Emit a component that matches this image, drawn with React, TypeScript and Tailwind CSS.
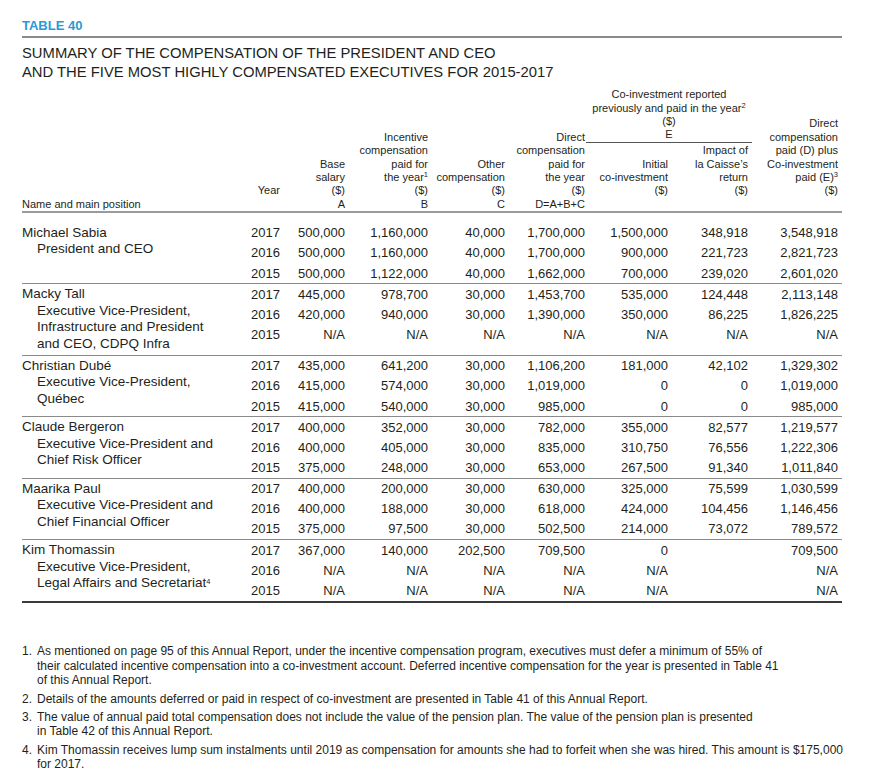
import type { ReactNode } from 'react';

const COLS = [
  'w-[40px]',
  'w-[65px]',
  'w-[83px]',
  'w-[77px]',
  'w-[81px] pr-[1px]',
  'w-[82px]',
  'w-[84px] pr-[4px]',
  'w-[90px] pr-[4px]',
];

type Group = {
  name: string;
  position: ReactNode[];
  rows: string[][];
  cls: string;
};

const NA = ['N/A', 'N/A', 'N/A', 'N/A', 'N/A', 'N/A', 'N/A'];

const GROUPS: Group[] = [
  {
    name: 'Michael Sabia',
    position: ['President and CEO'],
    cls: 'pt-[10px] border-b border-[#8a8a8a]',
    rows: [
      ['2017', '500,000', '1,160,000', '40,000', '1,700,000', '1,500,000', '348,918', '3,548,918'],
      ['2016', '500,000', '1,160,000', '40,000', '1,700,000', '900,000', '221,723', '2,821,723'],
      ['2015', '500,000', '1,122,000', '40,000', '1,662,000', '700,000', '239,020', '2,601,020'],
    ],
  },
  {
    name: 'Macky Tall',
    position: [
      'Executive Vice-President,',
      'Infrastructure and President',
      'and CEO, CDPQ Infra',
    ],
    cls: 'h-[71.5px] border-b border-[#8a8a8a]',
    rows: [
      ['2017', '445,000', '978,700', '30,000', '1,453,700', '535,000', '124,448', '2,113,148'],
      ['2016', '420,000', '940,000', '30,000', '1,390,000', '350,000', '86,225', '1,826,225'],
      ['2015', ...NA],
    ],
  },
  {
    name: 'Christian Dubé',
    position: ['Executive Vice-President,', 'Québec'],
    cls: 'border-b border-[#8a8a8a]',
    rows: [
      ['2017', '435,000', '641,200', '30,000', '1,106,200', '181,000', '42,102', '1,329,302'],
      ['2016', '415,000', '574,000', '30,000', '1,019,000', '0', '0', '1,019,000'],
      ['2015', '415,000', '540,000', '30,000', '985,000', '0', '0', '985,000'],
    ],
  },
  {
    name: 'Claude Bergeron',
    position: ['Executive Vice-President and', 'Chief Risk Officer'],
    cls: 'border-b border-[#8a8a8a]',
    rows: [
      ['2017', '400,000', '352,000', '30,000', '782,000', '355,000', '82,577', '1,219,577'],
      ['2016', '400,000', '405,000', '30,000', '835,000', '310,750', '76,556', '1,222,306'],
      ['2015', '375,000', '248,000', '30,000', '653,000', '267,500', '91,340', '1,011,840'],
    ],
  },
  {
    name: 'Maarika Paul',
    position: ['Executive Vice-President and', 'Chief Financial Officer'],
    cls: 'border-b border-[#8a8a8a]',
    rows: [
      ['2017', '400,000', '200,000', '30,000', '630,000', '325,000', '75,599', '1,030,599'],
      ['2016', '400,000', '188,000', '30,000', '618,000', '424,000', '104,456', '1,146,456'],
      ['2015', '375,000', '97,500', '30,000', '502,500', '214,000', '73,072', '789,572'],
    ],
  },
  {
    name: 'Kim Thomassin',
    position: [
      'Executive Vice-President,',
      <>
        Legal Affairs and Secretariat<sup className="text-[7.5px]">4</sup>
      </>,
    ],
    cls: 'border-b-2 border-[#3a3a3a]',
    rows: [
      ['2017', '367,000', '140,000', '202,500', '709,500', '0', '', '709,500'],
      ['2016', 'N/A', 'N/A', 'N/A', 'N/A', 'N/A', '', 'N/A'],
      ['2015', 'N/A', 'N/A', 'N/A', 'N/A', 'N/A', '', 'N/A'],
    ],
  },
];

/** Stack of header lines, bottom-aligned, one 13.35px slot per line. */
function HeadLines({
  lines,
  className = '',
  align = 'text-right',
}: {
  lines: ReactNode[];
  className?: string;
  align?: string;
}) {
  return (
    <div className={`flex flex-col ${className}`}>
      {lines.map((l, i) => (
        <div key={i} className={`h-[13.35px] whitespace-nowrap leading-[13.35px] ${align}`}>
          {l}
        </div>
      ))}
    </div>
  );
}

function Sup({ n }: { n: string }) {
  return <sup className="text-[7.5px]">{n}</sup>;
}

function Header() {
  return (
    <div className="mt-[7.4px] flex items-end border-b-2 border-[#9a9a9a] text-[11px]">
      <HeadLines lines={['Name and main position']} align="text-left" className="w-[218px]" />
      <HeadLines lines={['Year', '']} className={COLS[0]} />
      <HeadLines lines={['Base', 'salary', '($)', 'A']} className={COLS[1]} />
      <HeadLines
        lines={['Incentive', 'compensation', 'paid for', <>the year<Sup n="1" /></>, '($)', 'B']}
        className={COLS[2]}
      />
      <HeadLines lines={['Other', 'compensation', '($)', 'C']} className={COLS[3]} />
      <HeadLines
        lines={['Direct', 'compensation', 'paid for', 'the year', '($)', 'D=A+B+C']}
        className={COLS[4]}
      />
      <div className="flex flex-col">
        <div className="border-b border-[#555]">
          <HeadLines
            align="text-center"
            lines={[
              'Co-investment reported',
              <>previously and paid in the year<Sup n="2" /></>,
              '($)',
              'E',
            ]}
          />
        </div>
        <div className="mt-[1.5px] flex">
          <HeadLines lines={['', 'Initial', 'co-investment', '($)', '']} className={COLS[5]} />
          <HeadLines
            lines={['Impact of', 'la Caisse\u2019s', 'return', '($)', '']}
            className={COLS[6]}
          />
        </div>
      </div>
      <HeadLines
        lines={[
          'Direct',
          'compensation',
          'paid (D) plus',
          'Co-investment',
          <>paid (E)<Sup n="3" /></>,
          '($)',
          '',
        ]}
        className={COLS[7]}
      />
    </div>
  );
}

function GroupRows({ group }: { group: Group }) {
  return (
    <div className={`flex ${group.cls}`}>
      <div className="w-[218px] pt-[1.8px] text-[13.5px] leading-[16.6px]">
        <div className="whitespace-nowrap">{group.name}</div>
        {group.position.map((p, i) => (
          <div key={i} className="whitespace-nowrap pl-[15px]">
            {p}
          </div>
        ))}
      </div>
      <div className="flex flex-col">
        {group.rows.map((row, r) => (
          <div key={r} className="flex h-[20.17px] items-center">
            {row.map((cell, c) => (
              <div key={c} className={`text-right whitespace-nowrap ${COLS[c]}`}>
                {cell}
              </div>
            ))}
          </div>
        ))}
      </div>
    </div>
  );
}

const NOTES: { n: string; lines: ReactNode[] }[] = [
  {
    n: '1.',
    lines: [
      'As mentioned on page 95 of this Annual Report, under the incentive compensation program, executives must defer a minimum of 55% of',
      'their calculated incentive compensation into a co-investment account. Deferred incentive compensation for the year is presented in Table 41',
      'of this Annual Report.',
    ],
  },
  {
    n: '2.',
    lines: [
      'Details of the amounts deferred or paid in respect of co-investment are presented in Table 41 of this Annual Report.',
    ],
  },
  {
    n: '3.',
    lines: [
      'The value of annual paid total compensation does not include the value of the pension plan. The value of the pension plan is presented',
      'in Table 42 of this Annual Report.',
    ],
  },
  {
    n: '4.',
    lines: [
      'Kim Thomassin receives lump sum instalments until 2019 as compensation for amounts she had to forfeit when she was hired. This amount is $175,000',
      'for 2017.',
    ],
  },
];

export default function App() {
  return (
    <div className="min-h-[773px] w-[889px] bg-white px-[22px] pt-[18px] font-['Liberation_Sans',Arial,sans-serif] text-[#231f20]">
      <div className="w-[820px]">
        <div className="h-[16px] text-[13px] font-bold leading-[16px] text-[#2b9ad3]">TABLE 40</div>
        <div className="mt-[2px] h-[1.5px] bg-[#8a8a8a]" />
        <h1 className="mt-[6.6px] text-[14.8px] leading-[18.4px]">
          SUMMARY OF THE COMPENSATION OF THE PRESIDENT AND CEO
          <br />
          AND THE FIVE MOST HIGHLY COMPENSATED EXECUTIVES FOR 2015-2017
        </h1>

        <Header />

        <div className="text-[13px]">
          {GROUPS.map((g) => (
            <GroupRows key={g.name} group={g} />
          ))}
        </div>

        <ol className="mt-[41.5px] text-[12px] leading-[14.5px]">
          {NOTES.map((note, i) => (
            <li key={note.n} className={`flex ${i > 0 ? 'mt-[3.8px]' : ''}`}>
              <span className="w-[15px] shrink-0">{note.n}</span>
              <div>
                {note.lines.map((l, j) => (
                  <div key={j} className="whitespace-nowrap">
                    {l}
                  </div>
                ))}
              </div>
            </li>
          ))}
        </ol>
      </div>
    </div>
  );
}
